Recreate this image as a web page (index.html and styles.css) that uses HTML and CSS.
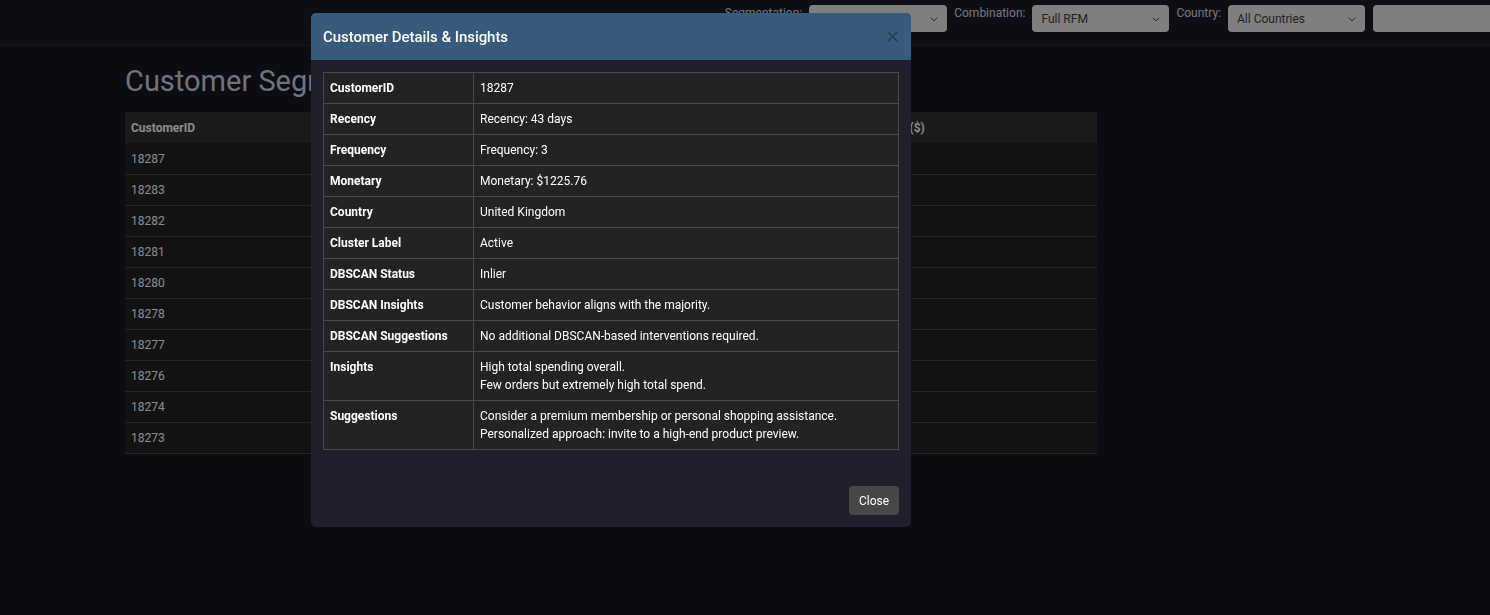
FILE: index.html
```html
<!DOCTYPE html>
<html lang="en">
<head>
<meta charset="utf-8">
<title>Customer Segmentation</title>
<link rel="stylesheet" href="styles.css">
</head>
<body>
<header class="navbar">
  <div class="filters">
    <label class="flabel">Segmentation:</label>
    <div class="select sel-seg"><span>RFM Clusters</span><svg class="chev" viewBox="0 0 16 16"><path d="M3 6l5 5 5-5" fill="none" stroke="currentColor" stroke-width="1.6"/></svg></div>
    <label class="flabel">Combination:</label>
    <div class="select"><span>Full RFM</span><svg class="chev" viewBox="0 0 16 16"><path d="M3 6l5 5 5-5" fill="none" stroke="currentColor" stroke-width="1.6"/></svg></div>
    <label class="flabel">Country:</label>
    <div class="select sel-last"><span>All Countries</span><svg class="chev" viewBox="0 0 16 16"><path d="M3 6l5 5 5-5" fill="none" stroke="currentColor" stroke-width="1.6"/></svg></div>
    <div class="search"></div>
  </div>
</header>

<main class="main">
  <h1 class="title">Customer Segmentation Dashboard</h1>
  <table class="list">
    <colgroup>
      <col class="c1"><col class="c2"><col class="c3"><col class="c4">
    </colgroup>
    <thead>
      <tr><th>CustomerID</th><th>Recency</th><th>Frequency</th><th>Monetary ($)</th></tr>
    </thead>
    <tbody>
      <tr><td>18287</td><td>43</td><td>3</td><td>1225.76</td></tr>
      <tr><td>18283</td><td>4</td><td>16</td><td>2094.88</td></tr>
      <tr><td>18282</td><td>8</td><td>2</td><td>178.05</td></tr>
      <tr><td>18281</td><td>181</td><td>1</td><td>80.82</td></tr>
      <tr><td>18280</td><td>278</td><td>1</td><td>180.60</td></tr>
      <tr><td>18278</td><td>74</td><td>1</td><td>173.90</td></tr>
      <tr><td>18277</td><td>59</td><td>1</td><td>110.38</td></tr>
      <tr><td>18276</td><td>44</td><td>1</td><td>335.86</td></tr>
      <tr><td>18274</td><td>18</td><td>1</td><td>175.92</td></tr>
      <tr><td>18273</td><td>258</td><td>1</td><td>51.00</td></tr>
    </tbody>
  </table>
</main>

<div class="backdrop"></div>

<div class="modal">
  <div class="modal-header">
    <h2 class="modal-title">Customer Details &amp; Insights</h2>
    <button class="btn-close" aria-label="Close"><svg viewBox="0 0 16 16"><path d="M2 2l12 12M14 2L2 14" stroke="currentColor" stroke-width="1.6" fill="none"/></svg></button>
  </div>
  <div class="modal-body">
    <table class="details">
      <tr><th>CustomerID</th><td>18287</td></tr>
      <tr><th>Recency</th><td>Recency: 43 days</td></tr>
      <tr><th>Frequency</th><td>Frequency: 3</td></tr>
      <tr><th>Monetary</th><td>Monetary: $1225.76</td></tr>
      <tr><th>Country</th><td>United Kingdom</td></tr>
      <tr><th>Cluster Label</th><td>Active</td></tr>
      <tr><th>DBSCAN Status</th><td>Inlier</td></tr>
      <tr><th>DBSCAN Insights</th><td>Customer behavior aligns with the majority.</td></tr>
      <tr><th>DBSCAN Suggestions</th><td>No additional DBSCAN-based interventions required.</td></tr>
      <tr><th>Insights</th><td>High total spending overall.<br>Few orders but extremely high total spend.</td></tr>
      <tr><th>Suggestions</th><td>Consider a premium membership or personal shopping assistance.<br>Personalized approach: invite to a high-end product preview.</td></tr>
    </table>
  </div>
  <div class="modal-footer">
    <button class="btn">Close</button>
  </div>
</div>
</body>
</html>
```

FILE: styles.css
```css
* { box-sizing: border-box; }

html, body {
  margin: 0;
  padding: 0;
  height: 100%;
}

body {
  background: #161821;
  font-family: Roboto, "Liberation Sans", Arial, sans-serif;
  color: #f0f2f6;
  overflow: hidden;
}

/* navbar */
.navbar {
  height: 46px;
  background: #1b1d26;
  border-bottom: 1px solid #272932;
  display: flex;
  justify-content: flex-end;
}

.filters {
  display: flex;
  align-items: flex-start;
  padding-top: 5px;
  margin-right: -40px;
}

.flabel {
  font-size: 12px;
  line-height: 16px;
  color: #d4dae4;
  margin-right: 7px;
}

.select {
  width: 137px;
  height: 27px;
  background: #e8e8e8;
  border-radius: 4px;
  color: #3c3f45;
  font-size: 12px;
  display: flex;
  align-items: center;
  justify-content: space-between;
  padding: 0 8px 0 9px;
  margin-right: 7px;
}

.sel-seg { width: 138px; }
.sel-last { margin-right: 8px; }

.chev {
  width: 10px;
  height: 10px;
  color: #3c3f45;
}

.search {
  width: 157px;
  height: 27px;
  background: #e8e8e8;
  border-radius: 4px;
}

/* main content */
.main {
  padding-left: 125px;
  width: 1097px;
}

.title {
  font-size: 29px;
  font-weight: 400;
  color: #c9d3de;
  margin: 18px 0 13px;
  line-height: 35px;
  white-space: nowrap;
}

.list {
  width: 972px;
  border-collapse: collapse;
  table-layout: fixed;
  font-size: 12px;
}

.c1, .c2 { width: 241px; }
.c3 { width: 242px; }
.c4 { width: 248px; }

.list th {
  background: #303030;
  color: #fafcff;
  text-align: left;
  font-weight: 700;
  height: 31px;
  padding: 0 6px;
  vertical-align: middle;
}

.list td {
  background: #212121;
  color: #fafcff;
  height: 31px;
  padding: 1px 6px 0;
  border-bottom: 1px solid #454545;
  vertical-align: middle;
}

/* backdrop */
.backdrop {
  position: fixed;
  inset: 0;
  background: rgba(0, 0, 0, 0.45);
}

/* modal */
.modal {
  position: fixed;
  left: 311px;
  top: 13px;
  width: 600px;
  background: #1f202b;
  border-radius: 5px;
  overflow: hidden;
}

.modal-header {
  height: 47px;
  background: #365b7d;
  display: flex;
  align-items: center;
  justify-content: space-between;
  padding: 0 12px;
}

.modal-title {
  margin: 0;
  font-size: 15px;
  font-weight: 500;
  color: #ffffff;
  letter-spacing: -0.05px;
}

.btn-close {
  background: none;
  border: 0;
  padding: 0;
  width: 13px;
  height: 13px;
  color: #1d3550;
  display: flex;
}

.btn-close svg { width: 13px; height: 13px; }

.modal-body {
  padding: 12px 12px 0;
}

.details {
  width: 100%;
  border-collapse: collapse;
  font-size: 12px;
  line-height: 18px;
  background: #232323;
}

.details th,
.details td {
  border: 1px solid #4a4a4a;
  padding: 6px 6px;
  text-align: left;
  vertical-align: top;
  color: #ffffff;
}

.details th {
  width: 150px;
  font-weight: 700;
}

.details td {
  font-weight: 400;
}

.modal-footer {
  display: flex;
  justify-content: flex-end;
  padding: 36px 12px 12px;
}

.btn {
  width: 50px;
  height: 29px;
  border: 0;
  border-radius: 4px;
  background: #474747;
  color: #ffffff;
  font-family: Roboto, "Liberation Sans", Arial, sans-serif;
  font-size: 12px;
  padding: 0;
}
```
